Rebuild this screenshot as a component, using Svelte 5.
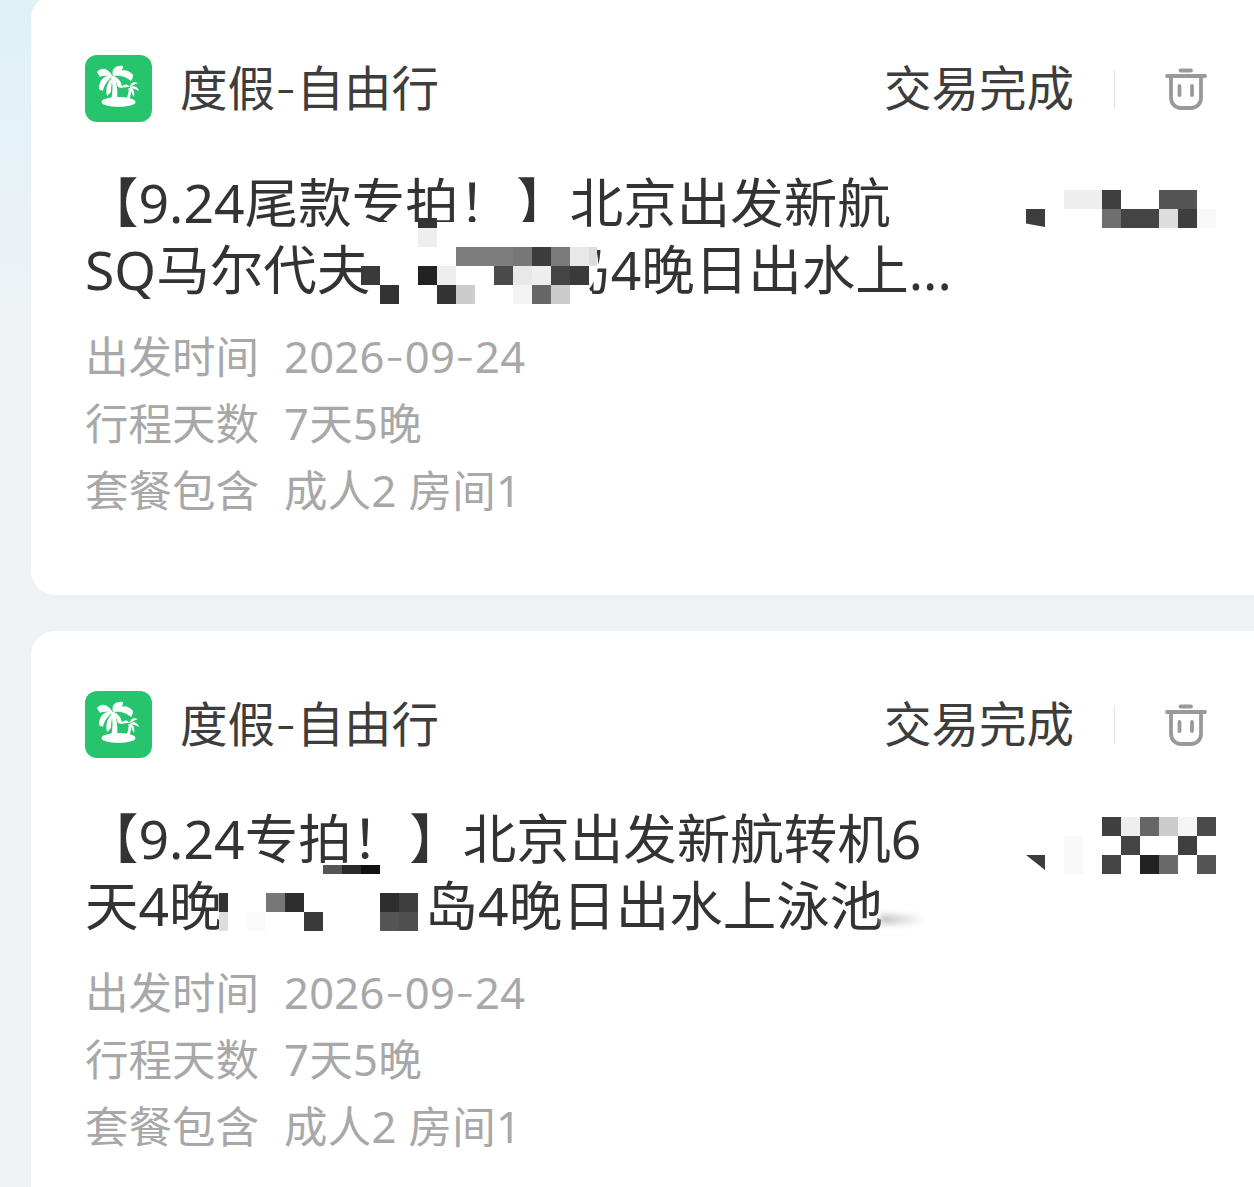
<script>
  // mosaic cells are written as page coords [x, y, w, h, colour], then shifted into the card
  const CELL = 19;
  const row = (y, h, list) => list.map(([x, c, w = CELL]) => [x, y, w, h, c]);

  const orders = [
    {
      top: -5,
      lines: [
        { lead: "【9.24尾款专拍！", text: "】北京出发新航" },
        { text: "SQ马尔代夫", gap: 187, rest: "岛4晚日出水上..." }
      ],
      blobs: [[372, 222, 226, 82]],
      tris: [[1026, 209, 19, 18, "#3d3d3d", "polygon(0 0, 100% 0, 100% 100%, 0 80%)"]],
      cells: [
        ...row(218, 10, [[418, "#333"]]),
        ...row(228, 19, [[418, "#eee"]]),
        ...row(247, 19, [[456, "#7d7d7d"], [475, "#7d7d7d"], [494, "#7d7d7d"], [513, "#777"], [532, "#3c3c3c"], [551, "#7a7a7a"], [570, "#e8e8e8"], [589, "#ddd", 8]]),
        ...row(266, 19, [[361, "#3a3a3a"], [418, "#222"], [437, "#eee"], [494, "#4a4a4a"], [513, "#e8e8e8"], [532, "#eee"], [551, "#444"], [570, "#3a3a3a"]]),
        ...row(285, 19, [[380, "#333"], [437, "#333"], [456, "#ccc"], [513, "#f4f4f4"], [532, "#666"], [551, "#ccc"]]),
        ...row(190, 19, [[1064, "#eee", 38], [1102, "#3f3f3f"], [1159, "#555"], [1178, "#555"]]),
        ...row(209, 19, [[1102, "#6f6f6f"], [1121, "#444"], [1140, "#444"], [1159, "#ddd"], [1178, "#3e3e3e"], [1197, "#f8f8f8"]])
      ]
    },
    {
      top: 631,
      lines: [
        { lead: "【9.24专拍！", text: "】北京出发新航转机6" },
        { text: "天4晚", gap: 202, rest: "岛4晚日出水上泳池" }
      ],
      blobs: [],
      smudge: true,
      tris: [[1026, 855, 19, 15, "#3d3d3d", "polygon(0 0, 100% 0, 100% 100%)"]],
      cells: [
        ...row(865, 9, [[323, "#555"], [342, "#2a2a2a"], [361, "#111"]]),
        ...row(893, 19, [[219, "#333", 9], [266, "#777"], [285, "#2e2e2e"], [380, "#2e2e2e"], [399, "#3e3e3e"]]),
        ...row(912, 19, [[219, "#ddd", 9], [247, "#fafafa"], [304, "#3a3a3a"], [380, "#555"], [399, "#4f4f4f"]]),
        ...row(817, 19, [[1102, "#404040"], [1121, "#eee"], [1140, "#666"], [1159, "#ccc"], [1178, "#f5f5f5"], [1197, "#4a4a4a"]]),
        ...row(836, 19, [[1064, "#f8f8f8"], [1121, "#444"], [1178, "#3f3f3f"]]),
        ...row(855, 19, [[1064, "#f8f8f8"], [1102, "#444"], [1140, "#222"], [1159, "#6a6a6a"], [1197, "#555"]])
      ]
    }
  ];

  const meta = [
    ["出发时间", "2026-09-24"],
    ["行程天数", "7天5晚"],
    ["套餐包含", "成人2 房间1"]
  ];

  const box = (o, [x, y, w, h, c]) =>
    `left:${x - 31}px;top:${y - o.top}px;width:${w}px;height:${h}px;background:${c ?? "#fff"}`;
</script>

{#snippet dashed(text)}
  {#each text.split("-") as part, i}{#if i > 0}<span class="dash">-</span>{/if}{part}{/each}
{/snippet}

<main>
  {#each orders as o}
    <section class="card" style="margin-top:{o.top === -5 ? -5 : 36}px">
      <header>
        <div class="logo">
          <svg viewBox="0 0 67 67" width="67" height="67" fill="#fff">
            <ellipse cx="33.5" cy="47" rx="17" ry="5" />
            <path d="M26 21 C28 29 28 37 26 45 L32 45 C33 37 32 28 29 21 Z" />
            <path d="M28 22 C24 14 17 11 12 17 C13 19 14 20 15 22 C19 20 24 21 28 22 Z" />
            <path d="M28 21 C26 15 30 10 38 11 C39 13 36 16 35 18 C32 18 30 19 28 21 Z" />
            <path d="M28 21 C33 14 43 13 48 20 C48 23 47 24 46 26 C41 21 34 20 28 21 Z" />
            <path d="M28 21 C21 19 14 24 14 34 C16 36 17 35 18 36 C19 30 23 25 28 21 Z" />
            <path d="M28 22 C23 26 20 33 22 41 C24 39 25 38 26 37 C26 31 27 27 28 22 Z" />
            <path d="M28 21 C33 22 37 27 37 33 C35 33 34 32 33 32 C32 28 30 25 28 21 Z" />
            <path d="M43.5 33 C44 37 43 41 41 45 L44 45 C46 41 46.5 37 45.5 33 Z" />
            <path d="M45 32 C42 28 38 29 36 33 C39 32 42 32 45 32 Z" />
            <path d="M45 32 C45 28 49 26 53 28 C50 29 48 30 45 32 Z" />
            <path d="M45 32 C49 30 53 32 54 36 C51 34 48 34 45 32 Z" />
            <path d="M45 32 C48 33 50 37 49 42 C47 39 46 36 45 32 Z" />
          </svg>
        </div>
        <span class="kind">{@render dashed("度假-自由行")}</span>
        <span class="status">交易完成</span>
        <i class="divider"></i>
        <svg class="trash" viewBox="0 0 42 42" width="42" height="42" fill="none" stroke="#999" stroke-width="3.8" stroke-linecap="round">
          <path d="M15.5 2.5 H26" />
          <path d="M2 8 H40" />
          <path d="M6 8 V30 a10 10 0 0 0 10 10 h10 a10 10 0 0 0 10 -10 V8" />
          <path d="M14.5 18 V27 M27 18 V27" />
        </svg>
      </header>

      <h2>
        {#each o.lines as l}
          <span class="line">{#if l.lead}<span class="lead">{l.lead}</span>{/if}{l.text}{#if l.gap}<i class="hole" style="width:{l.gap}px"></i>{l.rest}{/if}</span>
        {/each}
      </h2>

      <dl>
        {#each meta as [k, v]}
          <div class="row"><dt>{k}</dt><dd>{@render dashed(v)}</dd></div>
        {/each}
      </dl>

      {#each o.blobs as b}
        <div class="blob" style={box(o, b)}></div>
      {/each}
      {#each o.cells as c}
        <div class="cell" style={box(o, c)}></div>
      {/each}
      {#each o.tris as t}
        <div class="cell" style="{box(o, t)};clip-path:{t[5]}"></div>
      {/each}
      {#if o.smudge}
        <div class="smudge"></div>
      {/if}
    </section>
  {/each}
</main>

<style>
  :global(body) {
    margin: 0;
    background: #eef2f5;
  }

  main {
    width: 1254px;
    height: 1187px;
    overflow: hidden;
    background: linear-gradient(180deg, #dff2f6 0, #eef2f5 320px);
    font-family: "Noto Sans", "Noto Sans CJK SC", sans-serif;
  }

  .card {
    position: relative;
    box-sizing: border-box;
    width: 1253px;
    margin-left: 31px;
    padding: 60px 77px 71px 54px;
    background: #fff;
    border-radius: 24px;
  }

  header {
    display: flex;
    align-items: center;
    height: 67px;
  }

  .logo {
    width: 67px;
    height: 67px;
    margin-right: 28px;
    border-radius: 12px;
    background: #25c46d;
  }

  .logo svg {
    display: block;
  }

  .kind,
  .status {
    padding-bottom: 6px;
    font-size: 47.5px;
    color: #3d3d3d;
    white-space: nowrap;
  }

  .kind {
    flex: 1;
  }

  .dash {
    font-family: Inter, sans-serif;
    font-weight: 300;
  }

  .divider {
    width: 1px;
    height: 38px;
    margin: 0 50px 0 40px;
    background: #e2e2e2;
  }

  .trash {
    flex: none;
    margin-top: 1px;
  }

  h2 {
    margin: 47px 0 20px;
    font-size: 53.5px;
    font-weight: 400;
    line-height: 67px;
    color: #333;
  }

  .line {
    display: block;
    white-space: nowrap;
  }

  .lead {
    margin-right: 4px;
  }

  .hole {
    display: inline-block;
  }

  dl {
    margin: 0;
  }

  .row {
    display: flex;
    height: 67px;
    line-height: 67px;
    font-size: 43.5px;
    color: #a8a8a8;
    white-space: nowrap;
  }

  dt {
    width: 199px;
  }

  dd {
    margin: 0;
    letter-spacing: 0.3px;
  }

  .cell,
  .blob,
  .smudge {
    position: absolute;
  }

  .blob {
    border-radius: 0 40px 40px 0;
  }

  .smudge {
    left: 849px;
    top: 284px;
    width: 46px;
    height: 9px;
    background: linear-gradient(90deg, #bbb, #fff);
    filter: blur(3px);
  }
</style>
